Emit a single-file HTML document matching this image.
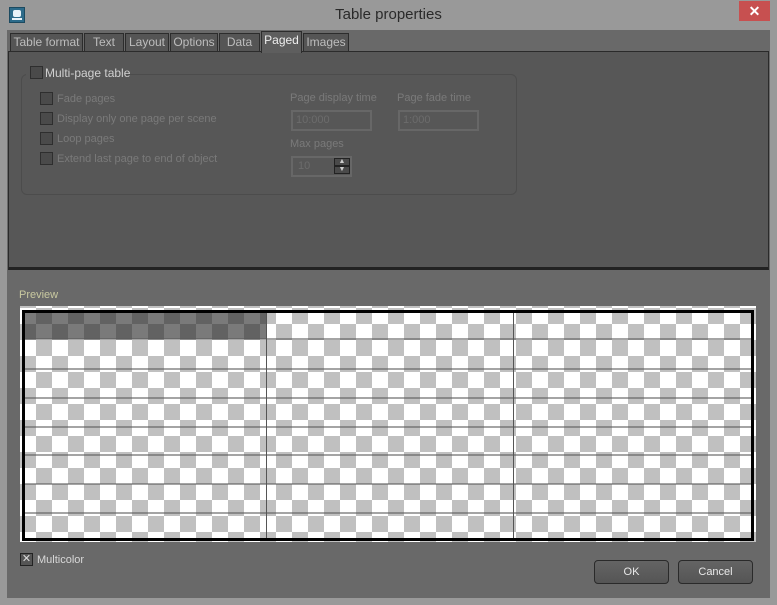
<!DOCTYPE html>
<html><head><style>
*{margin:0;padding:0;box-sizing:border-box}
body{width:777px;height:605px;background:#999;font-family:"Liberation Sans",sans-serif;font-size:11px;position:relative;overflow:hidden}
.a{position:absolute}
.t{color:#7a7a7a;font-size:11px}
.cb{position:absolute;width:13px;height:13px;border:1px solid #2e2e2e;background:#4a4a4a}
.tab{position:absolute;top:33px;height:19px;background:#555;border:1px solid #2c2c2c;color:#bdbdbd;font-size:12px;text-align:center;line-height:17px}
.in{position:absolute;border:2px solid #676767;color:#6c6c6c;font-size:11px;line-height:16px;padding-left:3px}
.btn{position:absolute;top:560px;width:75px;height:24px;border:1px solid #2a2a2a;border-radius:4px;background:linear-gradient(#646464,#555);color:#e8e8e8;font-size:11px;text-align:center;line-height:22px}
.hl{position:absolute;left:25px;width:726px;height:2px;background:rgba(90,90,90,.55)}
</style></head><body>
<div class="a" style="left:0;top:0;width:777px;height:32px;background:#999"></div>
<div class="a" style="left:9px;top:7px;width:16px;height:16px;background:#2d6b8a;border:1px solid #1c4a60"><div class="a" style="left:3px;top:2px;width:8px;height:7px;background:#e8f2f8;border-radius:2px"></div><div class="a" style="left:2px;top:10px;width:10px;height:2px;background:#e8f2f8"></div></div>
<div class="a" style="left:0;width:777px;top:6px;text-align:center;font-size:15px;color:#2a2a2a">Table properties</div>
<div class="a" style="left:739px;top:1px;width:31px;height:20px;background:#c75050;color:#fff;text-align:center;font-size:14px;line-height:20px;font-weight:bold">✕</div>
<div class="a" style="left:7px;top:30px;width:763px;height:568px;background:#696969"></div>
<div class="a" style="left:8px;top:51px;width:761px;height:219px;background:#575757;border:1px solid #2a2a2a;border-bottom:3px solid #222"></div>
<div class="tab" style="left:10px;width:73px">Table format</div>
<div class="tab" style="left:84px;width:40px">Text</div>
<div class="tab" style="left:125px;width:44px">Layout</div>
<div class="tab" style="left:170px;width:48px">Options</div>
<div class="tab" style="left:219px;width:41px">Data</div>
<div class="tab" style="left:261px;top:31px;height:22px;width:41px;background:#5e5e5e;border-bottom:none;color:#eee">Paged</div>
<div class="tab" style="left:303px;width:46px">Images</div>
<div class="a" style="left:21px;top:74px;width:496px;height:121px;border:1px solid #4c4c4c;border-radius:6px"></div>
<div class="a" style="left:26px;top:65px;width:100px;height:15px;background:#575757"></div>
<div class="cb" style="left:30px;top:66px"></div>
<div class="a" style="left:45px;top:66px;color:#d0d0d0;font-size:12px">Multi-page table</div>
<div class="cb" style="left:40px;top:92px"></div><div class="a t" style="left:57px;top:93px">Fade pages</div>
<div class="cb" style="left:40px;top:112px"></div><div class="a t" style="left:57px;top:113px">Display only one page per scene</div>
<div class="cb" style="left:40px;top:132px"></div><div class="a t" style="left:57px;top:133px">Loop pages</div>
<div class="cb" style="left:40px;top:152px"></div><div class="a t" style="left:57px;top:153px">Extend last page to end of object</div>
<div class="a t" style="left:290px;top:92px">Page display time</div>
<div class="a t" style="left:397px;top:92px">Page fade time</div>
<div class="in" style="left:291px;top:110px;width:81px;height:21px">10:000</div>
<div class="in" style="left:398px;top:110px;width:81px;height:21px">1:000</div>
<div class="a t" style="left:290px;top:138px">Max pages</div>
<div class="in" style="left:291px;top:156px;width:61px;height:21px;padding-left:5px">10</div>
<div class="a" style="left:334px;top:158px;width:16px;height:8px;background:#4a4a4a;border:1px solid #222;color:#ccc;font-size:7px;line-height:6px;text-align:center">▲</div>
<div class="a" style="left:334px;top:166px;width:16px;height:8px;background:#4a4a4a;border:1px solid #222;color:#ccc;font-size:7px;line-height:6px;text-align:center">▼</div>
<div class="a" style="left:19px;top:289px;color:#c9c9a0;font-size:11px">Preview</div>
<div class="a" style="left:20px;top:306px;width:736px;height:236px;background-color:#fff;background-image:linear-gradient(45deg,#c0c0c0 25%,transparent 25%,transparent 75%,#c0c0c0 75%),linear-gradient(45deg,#c0c0c0 25%,transparent 25%,transparent 75%,#c0c0c0 75%);background-size:32px 32px;background-position:0 2px,16px 18px"></div>
<div class="a" style="left:24px;top:312px;width:242px;height:27px;background:rgba(40,40,40,.62)"></div>
<div class="a" style="left:22px;top:310px;width:732px;height:231px;border:3px solid #000"></div>
<div class="hl" style="top:338px"></div>
<div class="hl" style="top:368px"></div>
<div class="hl" style="top:397px"></div>
<div class="hl" style="top:426px"></div>
<div class="hl" style="top:454px"></div>
<div class="hl" style="top:483px"></div>
<div class="hl" style="top:512px"></div>
<div class="a" style="left:266px;top:313px;width:1px;height:225px;background:#555"></div>
<div class="a" style="left:513px;top:313px;width:1px;height:225px;background:#555"></div>
<div class="a" style="left:20px;top:553px;width:13px;height:13px;border:1px solid #222;background:#555;color:#ddd;font-size:11px;line-height:11px;text-align:center">✕</div>
<div class="a" style="left:37px;top:554px;color:#d8d8d8;font-size:11px">Multicolor</div>
<div class="btn" style="left:594px">OK</div>
<div class="btn" style="left:678px">Cancel</div>
</body></html>
